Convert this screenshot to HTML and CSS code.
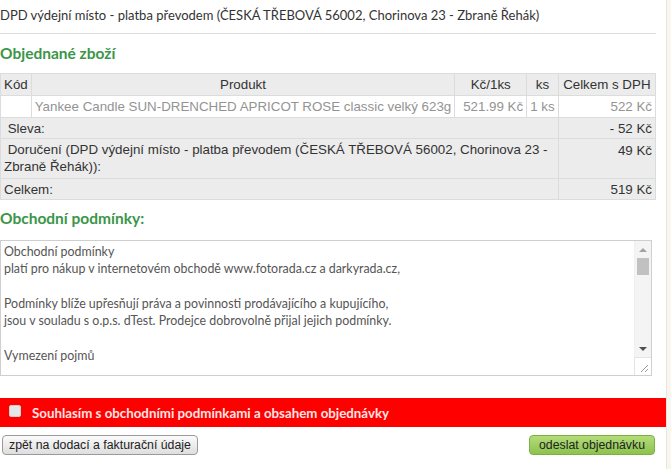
FILE: index.html
```html
<!DOCTYPE html>
<html lang="cs">
<head>
<meta charset="utf-8">
<link rel="stylesheet" href="styles.css">
</head>
<body>
<div class="page">
  <div class="content">
    <p class="delivery">DPD výdejní místo - platba převodem (ČESKÁ TŘEBOVÁ 56002, Chorinova 23 - Zbraně Řehák)</p>
    <h2 class="section-title">Objednané zboží</h2>
    <table class="items">
      <thead>
        <tr>
          <th class="c-kod">Kód</th>
          <th class="c-prod">Produkt</th>
          <th class="c-price">Kč/1ks</th>
          <th class="c-ks">ks</th>
          <th class="c-total">Celkem s DPH</th>
        </tr>
      </thead>
      <tbody>
        <tr class="item">
          <td></td>
          <td>Yankee Candle SUN-DRENCHED APRICOT ROSE classic velký 623g</td>
          <td class="num">521.99 Kč</td>
          <td>1 ks</td>
          <td class="num">522 Kč</td>
        </tr>
        <tr class="sum">
          <td colspan="4" class="label">&nbsp;Sleva:</td>
          <td class="num">- 52 Kč</td>
        </tr>
        <tr class="sum two">
          <td colspan="4" class="label">&nbsp;Doručení (DPD výdejní místo - platba převodem (ČESKÁ TŘEBOVÁ 56002, Chorinova 23 - Zbraně Řehák)):</td>
          <td class="num top">49 Kč</td>
        </tr>
        <tr class="sum">
          <td colspan="4" class="label">Celkem:</td>
          <td class="num">519 Kč</td>
        </tr>
      </tbody>
    </table>
    <h2 class="section-title terms-title">Obchodní podmínky:</h2>
    <div class="terms">
      <textarea class="terms-text" readonly>Obchodní podmínky
platí pro nákup v internetovém obchodě www.fotorada.cz a darkyrada.cz,

Podmínky blíže upřesňují práva a povinnosti prodávajícího a kupujícího,
jsou v souladu s o.p.s. dTest. Prodejce dobrovolně přijal jejich podmínky.

Vymezení pojmů

Prodávající: provozovatel internetového obchodu
Kupující: zákazník internetového obchodu</textarea>
      <div class="scrollbar">
        <span class="arrow up"></span>
        <div class="track"><span class="thumb"></span></div>
        <span class="arrow down"></span>
        <span class="grip">
          <svg width="9" height="9" viewBox="0 0 9 9"><path d="M1 8 L8 1 M5 8 L8 5" stroke="#9a9a9a" stroke-width="1" fill="none"/></svg>
        </span>
      </div>
    </div>
    <label class="agree">
      <span class="box"></span>
      <span class="agree-text">Souhlasím s obchodními podmínkami a obsahem objednávky</span>
    </label>
    <div class="actions">
      <button class="btn btn-back" type="button">zpět na dodací a fakturační údaje</button>
      <button class="btn btn-send" type="button">odeslat objednávku</button>
    </div>
  </div>
  <div class="side"></div>
</div>
</body>
</html>
```

FILE: styles.css
```css
* { box-sizing: border-box; }
html, body { margin: 0; padding: 0; background: #fff; }
body { font-family: "Lato", "Open Sans", sans-serif; color: #333; }

.page {
  display: flex;
  min-height: 469px;
}
.content {
  width: 666px;
  flex: none;
  padding-top: 7px;
}
.side {
  flex: 1;
  background: #f7f7f0;
  border-left: 1px solid #e6e6dc;
}

.delivery {
  margin: 0 10px 0 0;
  padding: 0 0 9px 0;
  font-size: 13px;
  line-height: 17px;
  border-bottom: 1px solid #dcdcdc;
  color: #333;
}

.section-title {
  margin: 9px 0 0 0;
  font-size: 15.5px;
  line-height: 20px;
  font-weight: bold;
  color: #3a9648;
}

.items {
  margin-top: 10px;
  width: 656px;
  border-collapse: collapse;
  font-family: "Liberation Sans", Arial, sans-serif;
  font-size: 13.33px;
  color: #333;
}
.items th, .items td {
  border: 1px solid #dcdcdc;
  padding: 2px 3px;
  line-height: 17px;
  font-weight: normal;
  white-space: nowrap;
}
.items thead th { background: #ececec; height: 22px; padding: 1px 3px; }
.items .c-kod { width: 30px; text-align: left; }
.items .c-prod { text-align: center; }
.items .c-price { width: 73px; text-align: center; }
.items .c-ks { width: 30px; text-align: center; }
.items .c-total { width: 98px; text-align: center; }

.items .item td { background: #fff; color: #939393; height: 22px; }
.items .num { text-align: right; }
.items .sum td { background: #ececec; color: #333; height: 21px; padding: 1px 3px; }
.items .sum .label { padding-left: 3px; }
.items .sum.two .label { white-space: normal; padding: 2px 3px 3px 3px; line-height: 17px; }
.items .sum .top { vertical-align: top; padding-top: 3px; }

.terms-title { margin-top: 8px; }

.terms {
  display: flex;
  margin-top: 12px;
  width: 652px;
  height: 136px;
  border: 1px solid #cfcfcf;
  background: #fff;
}
.terms-text {
  flex: 1;
  min-width: 0;
  border: none;
  resize: none;
  outline: none;
  overflow: hidden;
  padding: 2px 3px;
  font-family: "Lato", "Open Sans", sans-serif;
  font-size: 12.4px;
  line-height: 17.3px;
  color: #555;
  background: transparent;
}
.scrollbar {
  width: 17px;
  display: flex;
  flex-direction: column;
  background: #f4f4f4;
  border-left: 1px solid #f0f0f0;
}
.arrow {
  height: 17px;
  display: flex;
  align-items: center;
  justify-content: center;
}
.arrow::before {
  content: "";
  width: 0;
  height: 0;
  border-left: 4px solid transparent;
  border-right: 4px solid transparent;
}
.arrow.up::before { border-bottom: 4px solid #a3a3a3; }
.arrow.down::before { border-top: 4px solid #505050; }
.track {
  flex: 1;
  padding: 0 2px;
}
.thumb {
  display: block;
  height: 17px;
  background: #c1c1c1;
}
.grip {
  height: 18px;
  background: #fff;
  border-top: 1px solid #e4e4e4;
  display: flex;
  align-items: flex-end;
  justify-content: flex-end;
  padding: 0 2px 2px 0;
  margin-left: -1px;
  border-left: 1px solid #e4e4e4;
}
.grip svg { display: block; }

.agree {
  margin-top: 22px;
  height: 29px;
  background: #ff0000;
  display: flex;
  align-items: center;
  gap: 11px;
  padding-left: 9px;
}
.box {
  width: 12px;
  height: 12px;
  background: #e6e6e6;
  border: 1px solid #d0d0d0;
  border-radius: 2px;
  margin-top: -4px;
}
.agree-text {
  font-size: 13.3px;
  font-weight: bold;
  color: #ffe4e4;
}

.actions {
  display: flex;
  justify-content: space-between;
  padding: 8px 11px 0 2px;
}
.btn {
  font-family: "Liberation Sans", Arial, sans-serif;
  font-size: 12.3px;
  height: 20px;
  padding: 0 6px;
  border-radius: 4px;
  color: #222;
  cursor: pointer;
}
.btn-back {
  background: linear-gradient(#fbfbfb, #dedede);
  border: 1px solid #9a9a9a;
}
.btn-send {
  background: linear-gradient(#b4dc7a, #8cc24e);
  border: 1px solid #7caf46;
  padding: 0 9px;
}
```
